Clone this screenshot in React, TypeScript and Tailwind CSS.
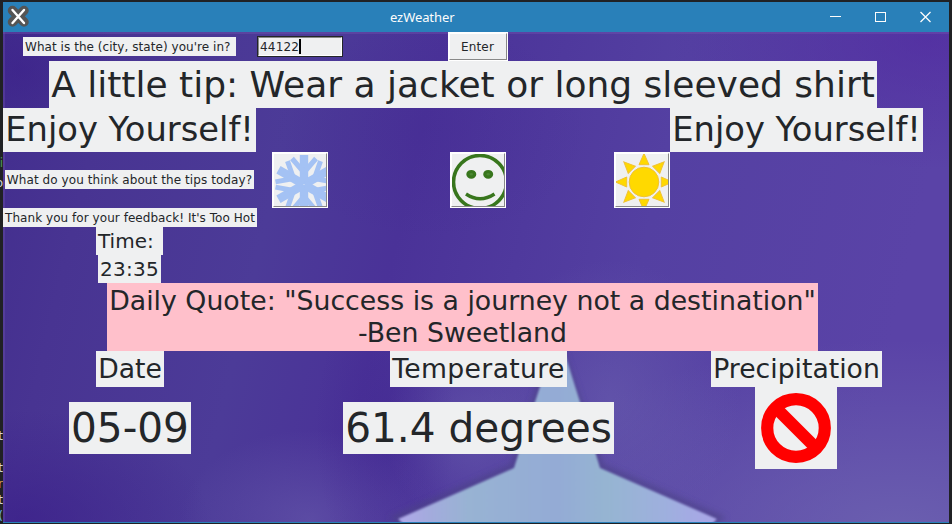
import type { ReactNode } from "react";

function Label({ className, children }: { className: string; children: ReactNode }) {
  return (
    <div className={`flex shrink-0 items-center justify-center whitespace-pre bg-[#eff0f1] text-[#232629] ${className}`}>
      {children}
    </div>
  );
}

function IconButton({ className, children }: { className: string; children: ReactNode }) {
  return (
    <button className={`h-14 w-14 shrink-0 border border-white bg-[#eff0f1] ${className}`}>
      <span className="block h-[54px] w-[54px] overflow-hidden border-b border-r border-t border-l border-b-[#888] border-r-[#888] border-l-white border-t-white">
        {children}
      </span>
    </button>
  );
}

function Snowflake() {
  return (
    <svg width="52" height="52" viewBox="0 0 52 52" stroke="#a4c2f4" fill="none">
      {[0, 60, 120, 180, 240, 300].map((a) => (
        <g key={a} transform={`rotate(${a} 30 30.5)`}>
          <path d="M30 30V1" strokeWidth="8.4" />
          <path d="M30 18.5L18 4.5M30 18.5L42 4.5" strokeWidth="5" />
        </g>
      ))}
    </svg>
  );
}

function Smiley() {
  return (
    <svg width="52" height="52" viewBox="0 0 52 52" fill="none" stroke="#38761d">
      <circle cx="28" cy="28" r="26.5" strokeWidth="3.6" />
      <ellipse cx="19.3" cy="20.3" rx="3.4" ry="2.8" strokeWidth="3.2" fill="#4b8732" />
      <ellipse cx="36.2" cy="20.3" rx="3.4" ry="2.8" strokeWidth="3.2" fill="#4b8732" />
      <path d="M14 40Q28 49.5 42.5 40" strokeWidth="3.4" />
    </svg>
  );
}

function Sun() {
  return (
    <svg width="52" height="52" viewBox="0 0 52 52" fill="#ffd900" stroke="#f1c232" strokeWidth="1">
      <circle cx="28" cy="28" r="14.8" />
      {[0, 45, 90, 135, 180, 225, 270, 315].map((a) => (
        <path key={a} d="M28-.5L33 10.7H23Z" transform={`rotate(${a} 28 28)`} />
      ))}
    </svg>
  );
}

function Backdrop() {
  return (
    <svg className="absolute inset-0" width="946" height="490" viewBox="3 32 946 490" preserveAspectRatio="none">
      <defs>
        <linearGradient id="base" x1="0" x2="1" y1="0" y2="0.12">
          <stop offset="0" stopColor="#422d8e" />
          <stop offset="0.12" stopColor="#483492" />
          <stop offset="0.32" stopColor="#4c3b98" />
          <stop offset="0.46" stopColor="#4a3298" />
          <stop offset="0.72" stopColor="#5440a2" />
          <stop offset="1" stopColor="#5a43a7" />
        </linearGradient>
        <radialGradient id="light">
          <stop offset="0" stopColor="#7068b2" stopOpacity="0.75" />
          <stop offset="1" stopColor="#7068b2" stopOpacity="0" />
        </radialGradient>
        <radialGradient id="deep">
          <stop offset="0" stopColor="#381b88" stopOpacity="0.7" />
          <stop offset="1" stopColor="#381b88" stopOpacity="0" />
        </radialGradient>
        <radialGradient id="violet">
          <stop offset="0" stopColor="#5027a0" stopOpacity="0.6" />
          <stop offset="1" stopColor="#5027a0" stopOpacity="0" />
        </radialGradient>
        <linearGradient id="star" x1="0" x2="1">
          <stop offset="0" stopColor="#b0a9ea" />
          <stop offset="0.1" stopColor="#a3abdd" />
          <stop offset="0.22" stopColor="#98b3d3" />
          <stop offset="0.5" stopColor="#94abd5" />
          <stop offset="0.66" stopColor="#96b5d2" />
          <stop offset="0.85" stopColor="#9fafdf" />
          <stop offset="1" stopColor="#aaa5e8" />
        </linearGradient>
        <filter id="edge"><feGaussianBlur stdDeviation="1.1" /></filter>
        <filter id="halo"><feGaussianBlur stdDeviation="3" /></filter>
      </defs>
      <rect x="3" y="32" width="946" height="490" fill="url(#base)" />
      <ellipse cx="310" cy="520" rx="130" ry="90" fill="url(#light)" opacity="0.6" />
      <ellipse cx="900" cy="530" rx="400" ry="190" fill="url(#light)" />
      <ellipse cx="610" cy="400" rx="130" ry="140" fill="url(#light)" opacity="0.6" />
      <ellipse cx="475" cy="430" rx="90" ry="100" fill="url(#light)" opacity="0.65" />
      <ellipse cx="385" cy="430" rx="70" ry="150" fill="url(#deep)" opacity="0.4" />
      <ellipse cx="20" cy="520" rx="190" ry="110" fill="url(#deep)" opacity="0.85" />
      <ellipse cx="20" cy="70" rx="100" ry="80" fill="url(#deep)" opacity="0.6" />
      <ellipse cx="430" cy="130" rx="160" ry="110" fill="url(#deep)" opacity="0.2" />
      <ellipse cx="930" cy="40" rx="260" ry="130" fill="url(#violet)" />
      <path d="M556 338L514 467L397 518L420 530H695L718 518L600 467Z" fill="none" stroke="#4b4386" strokeWidth="7" opacity="0.75" filter="url(#halo)" />
      <path d="M558 332L535 402L514 468L398 519L412 532H704L717 519L600 468L580 402Z" fill="url(#star)" filter="url(#edge)" />
      <path d="M3 33H949" stroke="#7959b3" strokeWidth="2" opacity="0.35" />
      <path d="M4 32V522" stroke="#795cb3" strokeWidth="2" opacity="0.3" />
    </svg>
  );
}

function TitleBar() {
  return (
    <header className="flex h-[30px] items-center bg-[#2980b9] font-['Noto_Sans',sans-serif] text-[13px] text-[#fcfcfc]">
      <svg className="ml-[3px] shrink-0" width="25" height="28" viewBox="0 0 25 28" fill="none" strokeLinecap="round">
        <path d="M6.5 7.5L18 19M18 7.5L6.5 19" stroke="#555" strokeWidth="9.5" />
        <path d="M6.5 7L18 20M18 7L6.5 20" stroke="#fff" strokeWidth="2.4" />
      </svg>
      <span className="ml-[359px] w-[70px] leading-[30px] tracking-[-0.08px]">ezWeather</span>
      <svg className="ml-auto mr-[16px]" width="104" height="14" viewBox="0 0 104 14" fill="none" stroke="#fcfcfc">
        <path d="M1 6.5H12" />
        <rect x="46.5" y="2.5" width="10" height="9" />
        <path d="M91.5 2L101.5 12M101.5 2L91.5 12" strokeWidth="1.3" />
      </svg>
    </header>
  );
}

export default function App() {
  return (
    <div className="flex h-[524px] w-[952px] overflow-hidden bg-[#202124] font-['DejaVu_Sans',sans-serif]">
      <aside className="flex w-[3px] shrink-0 flex-col items-end overflow-hidden text-xs leading-4 text-[#d5d5d5]">
        <span className="mt-[155px] text-[#4d9858]">i</span>
        <span className="mt-1">o</span>
        <span className="mt-[237px]">t</span>
        <span className="mt-4">t</span>
        <span className="text-[#d69b55]">r</span>
        <span>t</span>
        <span className="text-[#6eb7e8]">(</span>
      </aside>
      <div className="mt-0.5 flex h-[521px] w-[946px] shrink-0 flex-col border-b border-[#2980b9]">
        <TitleBar />
        <main className="relative h-[490px] overflow-hidden">
          <Backdrop />
          <div className="relative flex flex-col">
            <section className="flex h-[29px]">
              <Label className="ml-5 mt-[5px] h-[19px] w-[213px] justify-start! pl-0.5 text-xs tracking-[0.05px]">What is the (city, state) you're in?</Label>
              <div className="ml-[21px] mt-1 flex h-[21px] w-[86px] items-center border border-[#232629] bg-[#eff0f1] text-xs text-[#232629]">
                <div className="flex h-full w-full items-center border border-b-white border-l-[#888] border-r-white border-t-[#888] pl-px">
                  <span className="tracking-[0.2px]">44122</span>
                  <span className="h-[15px] w-0.5 bg-black" />
                </div>
              </div>
              <button className="ml-[105px] h-[29px] w-[60px] border border-white bg-[#eff0f1] text-xs text-[#232629]">
                <span className="flex h-[27px] w-[58px] items-center justify-center border border-b-[#888] border-l-white border-r-[#888] border-t-white pr-px tracking-[0.15px]">Enter</span>
              </button>
            </section>
            <Label className="ml-[46px] h-[47px] w-[828px] text-[36px]">A little tip: Wear a jacket or long sleeved shirt</Label>
            <section className="flex h-11 justify-between pr-[26px]">
              <Label className="h-11 w-[253px] pt-px text-[33.75px]">Enjoy Yourself!</Label>
              <Label className="h-11 w-[253px] pt-px text-[33.75px]">Enjoy Yourself!</Label>
            </section>
            <section className="flex h-14 items-center">
              <Label className="mb-0.5 ml-0.5 h-[19px] w-[249px] pt-px text-xs tracking-[0.08px]">What do you think about the tips today?</Label>
              <IconButton className="ml-[18px]"><Snowflake /></IconButton>
              <IconButton className="ml-[122px]"><Smiley /></IconButton>
              <IconButton className="ml-[108px]"><Sun /></IconButton>
            </section>
            <Label className="h-[19px] w-[254px] text-xs tracking-[0.05px]">Thank you for your feedback! It's Too Hot</Label>
            <section className="ml-[93px] flex w-[67px] flex-col items-center">
              <Label className="h-7 w-[67px] justify-start! pl-0.5 text-[20px]">Time: </Label>
              <Label className="h-7 w-[63px] text-[20px] tracking-[0.3px]">23:35</Label>
            </section>
            <blockquote className="ml-[104px] h-[68px] w-[711px] whitespace-nowrap bg-[#ffc0cb] pt-0.5 text-center text-[26.75px] leading-8 text-[#232629]">
              <p>Daily Quote: "Success is a journey not a destination"</p>
              <p>-Ben Sweetland</p>
            </blockquote>
            <section className="flex h-9 text-[26.67px]">
              <Label className="ml-[93px] h-9 w-[68px]">Date</Label>
              <Label className="ml-[226px] h-9 w-[177px] tracking-[0.35px]">Temperature</Label>
              <Label className="ml-[144px] h-9 w-[171px]">Precipitation</Label>
            </section>
            <section className="flex h-[82px] items-center text-[40.6px]">
              <Label className="ml-[66px] h-[52px] w-[122px]">05-09</Label>
              <Label className="ml-[152px] h-[52px] w-[271px]">61.4 degrees</Label>
              <div className="ml-[141px] h-[82px] w-[82px] bg-[#eff0f1]">
                <svg width="82" height="82" viewBox="0 0 82 82" fill="none" stroke="#f00" strokeWidth="12.2">
                  <circle cx="41" cy="41" r="28.8" />
                  <path d="M21 21L61 61" />
                </svg>
              </div>
            </section>
          </div>
        </main>
      </div>
    </div>
  );
}
